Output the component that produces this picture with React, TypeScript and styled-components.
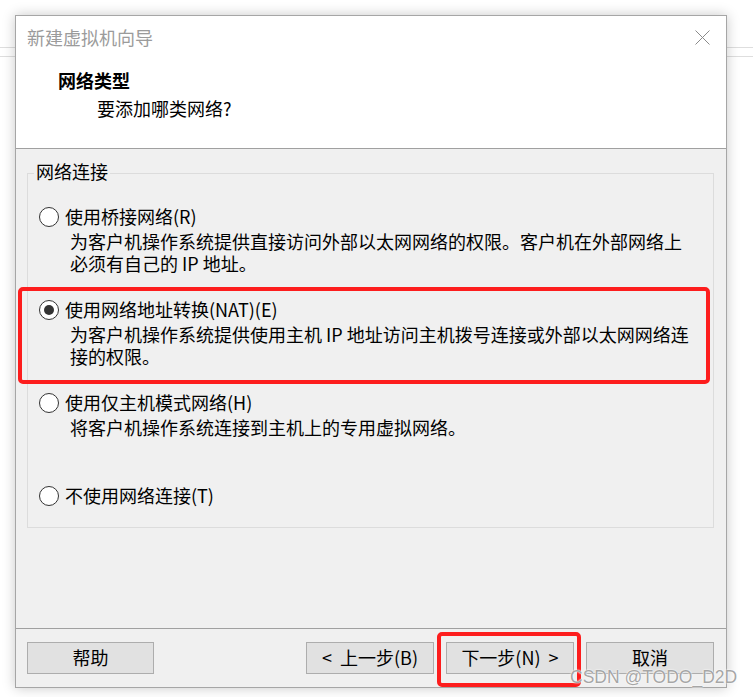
import React from "react";
import styled, { createGlobalStyle, css } from "styled-components";

const GlobalStyle = createGlobalStyle`
  html, body {
    margin: 0;
    padding: 0;
  }
  body {
    width: 753px;
    height: 697px;
    overflow: hidden;
    font-family: "Noto Sans CJK SC", "Noto Sans", sans-serif;
    background:
      linear-gradient(
        to bottom,
        transparent 47px,
        #dedede 47px,
        #dedede 48px,
        transparent 48px,
        transparent 56px,
        #dedede 56px,
        #dedede 57px,
        transparent 57px
      ),
      #ffffff;
  }
`;

const Page = styled.div`
  position: relative;
  width: 753px;
  height: 697px;
  padding: 15px 0 0 15px;
  box-sizing: border-box;
`;

const Dialog = styled.div`
  width: 712px;
  height: 673px;
  box-sizing: border-box;
  border: 1px solid #a6a6a6;
  background: #ffffff;
  display: flex;
  flex-direction: column;
  box-shadow: 0 0 12px rgba(0, 0, 0, 0.22);
`;

const TitleBar = styled.div`
  height: 45px;
  box-sizing: border-box;
  display: flex;
  align-items: center;
  justify-content: space-between;
  padding: 0 16px 4px 11px;
  font-size: 18px;
  color: #9b9b9b;
`;

const CloseButton = styled.span`
  display: flex;
  width: 15px;
  height: 15px;
  margin-top: 2px;
`;

const Header = styled.div`
  height: 88px;
  box-sizing: border-box;
  border-bottom: 1px solid #a0a0a0;
  padding: 7px 0 0 42px;
  color: #000;
  font-size: 18px;
`;

const HeaderTitle = styled.div`
  line-height: 24px;
  font-weight: bold;
`;

const HeaderSubtitle = styled.div`
  line-height: 24px;
  margin: 4px 0 0 39px;
`;

const Body = styled.div`
  flex: 1;
  background: #f0f0f0;
  border-bottom: 1px solid #a0a0a0;
  padding: 11px 12px 0 11px;
`;

const GroupBox = styled.fieldset`
  margin: 0;
  padding: 0 0 18px 0;
  border: 1px solid #dcdcdc;
  min-width: 0;
`;

const Legend = styled.legend`
  margin-left: 6px;
  padding: 0 2px 4px;
  font-size: 18px;
  line-height: 22px;
  color: #000;
`;

const OptionList = styled.div`
  display: flex;
  flex-direction: column;
  gap: 23px;
  margin-top: 18px;
  padding-left: 11px;
`;

const Option = styled.div<{ $highlight?: boolean }>`
  position: relative;
  ${(p) =>
    p.$highlight &&
    css`
      &::after {
        content: "";
        position: absolute;
        left: -21px;
        right: 3px;
        top: -10px;
        bottom: -17px;
        border: 4px solid #fd1d1d;
        border-radius: 5px;
        pointer-events: none;
      }
    `}
`;

const OptionRow = styled.label`
  display: flex;
  align-items: center;
  height: 26px;
  font-size: 18px;
  color: #000;
`;

const Radio = styled.span<{ $checked?: boolean }>`
  width: 20px;
  height: 20px;
  box-sizing: border-box;
  border-radius: 50%;
  border: 1.5px solid #333;
  background: #fff;
  display: flex;
  align-items: center;
  justify-content: center;
  flex-shrink: 0;
  &::before {
    content: "";
    width: 10px;
    height: 10px;
    border-radius: 50%;
    background: ${(p) => (p.$checked ? "#333" : "transparent")};
  }
`;

const OptionLabel = styled.span`
  margin-left: 6px;
  line-height: 26px;
  padding-bottom: 3px;
`;

const Description = styled.div`
  padding-left: 31px;
  font-size: 18px;
  line-height: 22px;
  min-height: 44px;
  color: #000;
  white-space: nowrap;
`;

const Footer = styled.div`
  height: 58px;
  display: flex;
  align-items: center;
  padding: 0 12px 0 11px;
  background: #f0f0f0;
  gap: 12px;
`;

const Spacer = styled.div`
  flex: 1;
`;

const Button = styled.button<{ $width?: number; $highlight?: boolean }>`
  position: relative;
  width: ${(p) => p.$width ?? 128}px;
  height: 32px;
  box-sizing: border-box;
  border: 1px solid #adadad;
  background: #e1e1e1;
  font-family: "Noto Sans CJK SC", "Noto Sans", sans-serif;
  font-size: 18px;
  line-height: 24px;
  color: #000;
  padding: 0 0 3px;
  display: flex;
  align-items: center;
  justify-content: center;
  white-space: pre;
  ${(p) =>
    p.$highlight &&
    css`
      &::after {
        content: "";
        position: absolute;
        left: -10px;
        right: -8px;
        top: -11px;
        bottom: -14px;
        border: 4px solid #fd1d1d;
        border-radius: 5px;
        pointer-events: none;
      }
    `}
`;

const Watermark = styled.div`
  position: absolute;
  left: 570px;
  top: 665px;
  font-family: "Liberation Sans", Arial, sans-serif;
  font-size: 17.5px;
  line-height: 24px;
  color: rgba(150, 150, 150, 0.85);
  text-shadow: 0 0 2px #fff, 0 0 1px #fff;
  white-space: nowrap;
  pointer-events: none;
`;

const CloseIcon = () => (
  <svg width="15" height="15" viewBox="0 0 15 15">
    <path d="M0.5 0.5 L14.5 14.5 M14.5 0.5 L0.5 14.5" stroke="#8a8a8a" strokeWidth="1" fill="none" />
  </svg>
);

export default function App() {
  return (
    <>
      <GlobalStyle />
      <Page>
        <Dialog>
          <TitleBar>
            <span>新建虚拟机向导</span>
            <CloseButton>
              <CloseIcon />
            </CloseButton>
          </TitleBar>
          <Header>
            <HeaderTitle>网络类型</HeaderTitle>
            <HeaderSubtitle>要添加哪类网络?</HeaderSubtitle>
          </Header>
          <Body>
            <GroupBox>
              <Legend>网络连接</Legend>
              <OptionList>
                <Option>
                  <OptionRow>
                    <Radio />
                    <OptionLabel>使用桥接网络(R)</OptionLabel>
                  </OptionRow>
                  <Description>
                    为客户机操作系统提供直接访问外部以太网网络的权限。客户机在外部网络上
                    <br />
                    必须有自己的 IP 地址。
                  </Description>
                </Option>
                <Option $highlight>
                  <OptionRow>
                    <Radio $checked />
                    <OptionLabel>使用网络地址转换(NAT)(E)</OptionLabel>
                  </OptionRow>
                  <Description>
                    为客户机操作系统提供使用主机 IP 地址访问主机拨号连接或外部以太网网络连
                    <br />
                    接的权限。
                  </Description>
                </Option>
                <Option>
                  <OptionRow>
                    <Radio />
                    <OptionLabel>使用仅主机模式网络(H)</OptionLabel>
                  </OptionRow>
                  <Description>将客户机操作系统连接到主机上的专用虚拟网络。</Description>
                </Option>
                <Option>
                  <OptionRow>
                    <Radio />
                    <OptionLabel>不使用网络连接(T)</OptionLabel>
                  </OptionRow>
                </Option>
              </OptionList>
            </GroupBox>
          </Body>
          <Footer>
            <Button $width={127}>帮助</Button>
            <Spacer />
            <Button>{"<  上一步(B)"}</Button>
            <Button $highlight>{"下一步(N)  >"}</Button>
            <Button>取消</Button>
          </Footer>
        </Dialog>
        <Watermark>CSDN @TODO_D2D</Watermark>
      </Page>
    </>
  );
}
